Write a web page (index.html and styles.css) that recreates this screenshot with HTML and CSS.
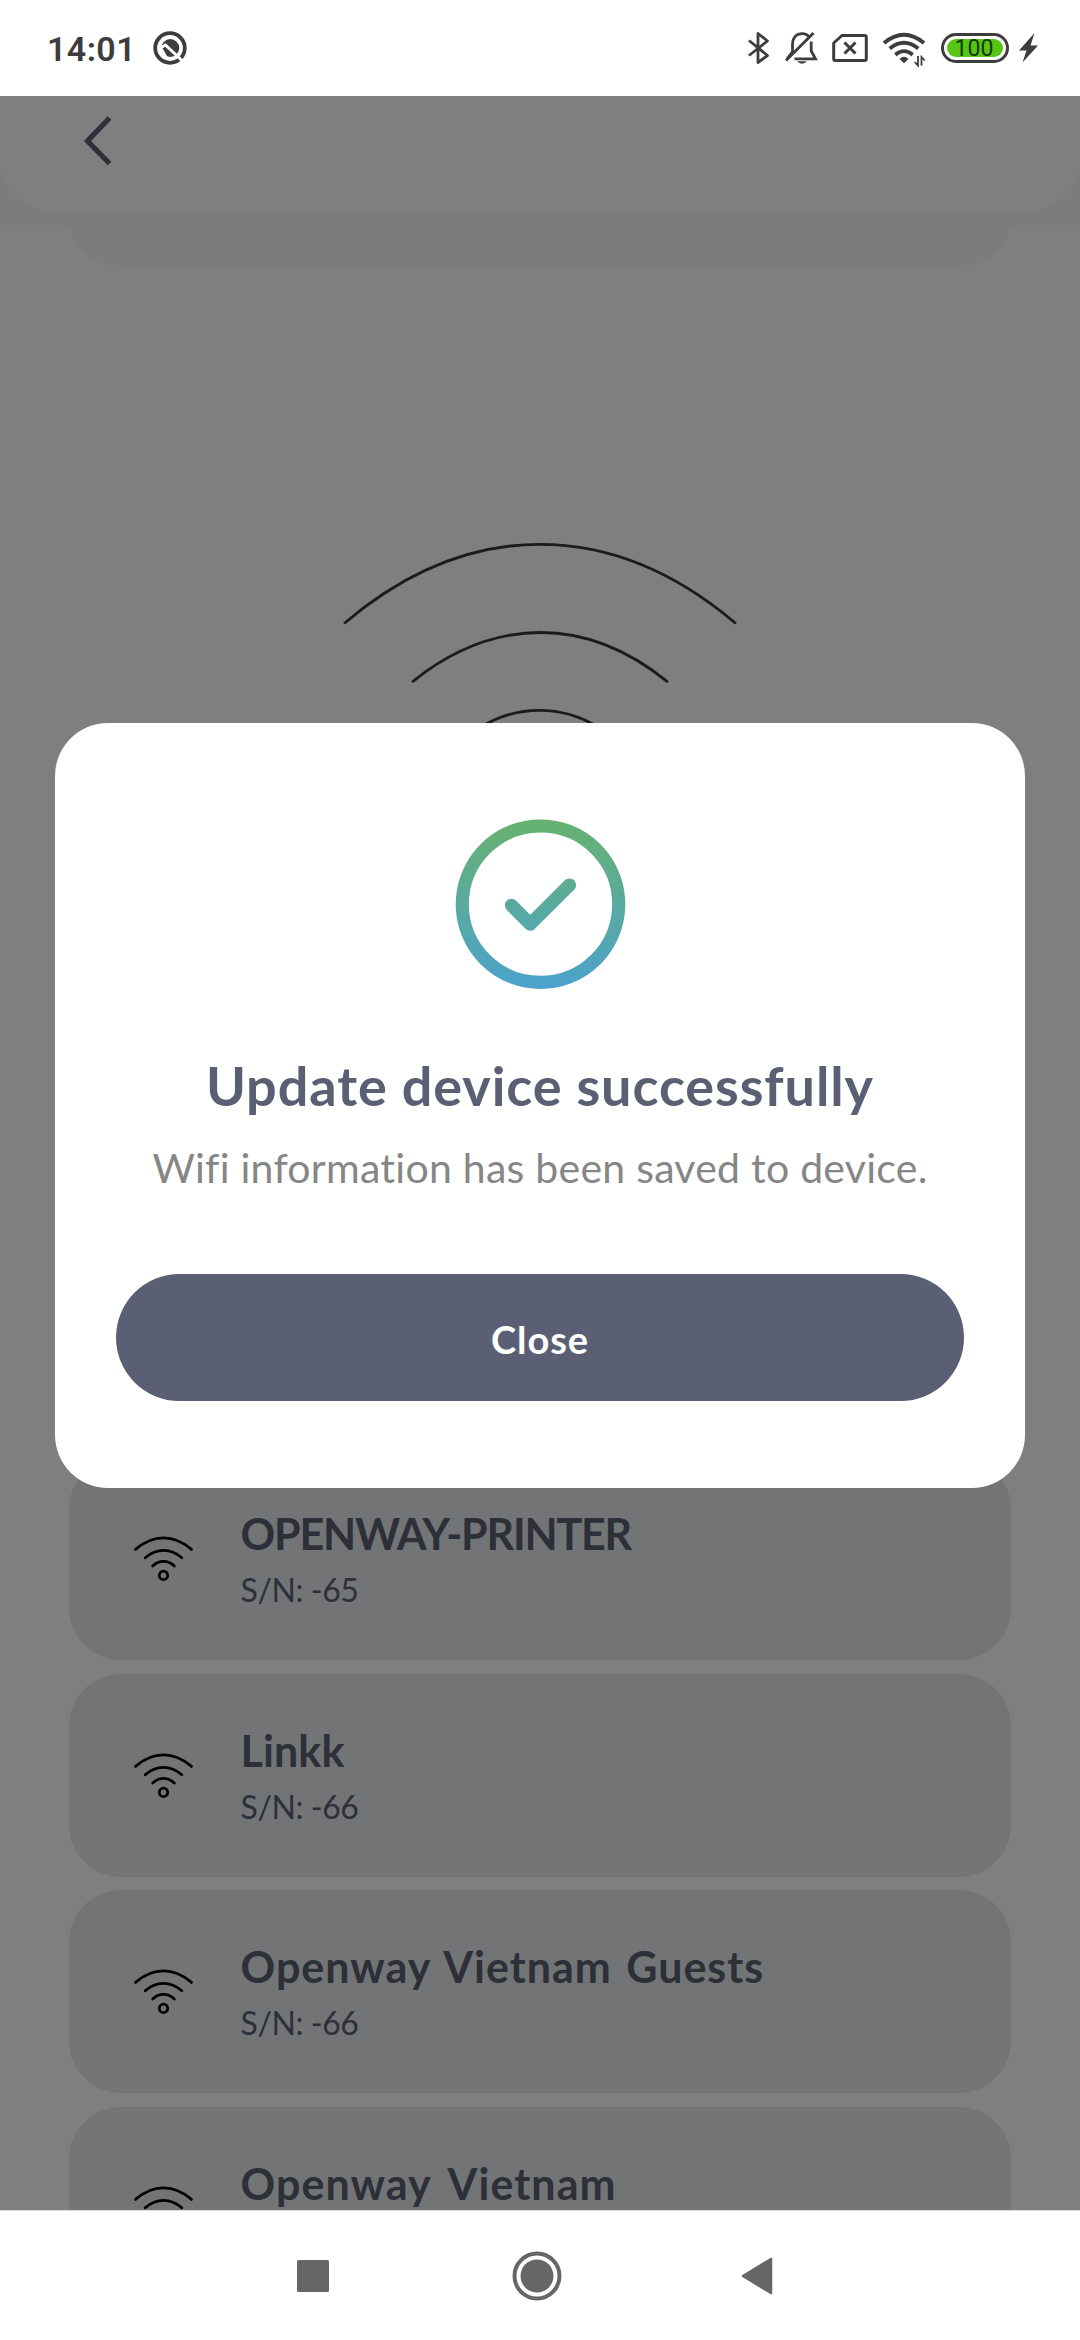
FILE: index.html
```html
<!DOCTYPE html>
<html lang="en">
<head>
<meta charset="utf-8">
<title>Update device</title>
<link rel="stylesheet" href="styles.css">
</head>
<body>
<svg class="defs" width="0" height="0">
  <symbol id="wifi" viewBox="0 0 62 48">
    <g fill="none" stroke="#000" stroke-width="2.8" stroke-linecap="round">
      <path d="M2.5 13.4C20 -2 41 -2 58.5 13.4"/>
      <path d="M12.2 21.8C23.5 11.9 37.5 11.9 48.8 21.8"/>
      <path d="M19.7 30C26 23.8 35 23.8 41.3 30"/>
      <circle cx="30.5" cy="39.4" r="4.2"/>
    </g>
  </symbol>
</svg>
<div class="screen">
  <header class="status">
    <span class="time">14:01</span>
    <svg class="app-badge" width="36" height="36" viewBox="152 30 36 36">
      <circle cx="170" cy="48" r="14.8" fill="none" stroke="#3d3d3d" stroke-width="3.8"/>
      <circle cx="170.3" cy="48" r="9" fill="#3d3d3d"/>
      <path d="M161 47.5L165.5 45L183 61.5" fill="none" stroke="#fff" stroke-width="3"/>
      <path d="M160 46L167 58" stroke="#fff" stroke-width="2"/>
    </svg>
    <div class="indicators">
      <svg width="36" height="40" viewBox="742 28 36 40" fill="none" stroke="#3d3d3d" stroke-width="2.8" stroke-linejoin="round">
        <path d="M749 40.5L767.5 55.5L758 62.5V33.5L767.5 41L749 55.5"/>
      </svg>
      <svg width="48" height="40" viewBox="778 28 48 40" fill="none" stroke="#3d3d3d" stroke-width="2.8">
        <path d="M787 58.8L792.5 52V45C792.5 37 797 33.6 802 33.6C805 33.6 807.5 34.8 809 36.5M811.2 41.5V51L815.5 58.8H794.5"/>
        <path d="M786 60.5L813.5 33"/>
        <path d="M797 61.3H807Q802 66 797 61.3Z" fill="#3d3d3d" stroke="none"/>
      </svg>
      <svg width="48" height="40" viewBox="826 28 48 40" fill="none" stroke="#3d3d3d" stroke-width="3" stroke-linejoin="round">
        <path d="M842 35.5H864.5Q866.3 35.5 866.3 37.3V58.7Q866.3 60.5 864.5 60.5H835.5Q833.7 60.5 833.7 58.7V43Z"/>
        <path d="M844.5 42.5L855.5 53.5M855.5 42.5L844.5 53.5"/>
      </svg>
      <svg width="60" height="40" viewBox="874 28 60 40" fill="none" stroke="#3d3d3d" stroke-width="3.8">
        <path d="M884 43Q904 26.5 924 43M889.7 48.5Q904 37 918.3 48.500M895.3 54.7Q904 47.5 912.7 54.7"/>
        <path d="M899.5 59Q904 54.5 908.5 59L904 63.3Z" fill="#3d3d3d" stroke="none"/>
        <path d="M918 56V65.5L914.8 62M921.500 65.500V57L924.800 60.500" stroke-width="1.8"/>
      </svg>
      <div class="battery"><span class="level">100</span></div>
      <svg class="bolt" width="20" height="32" viewBox="1019 32 20 32"><path d="M1034.500 33L1019 50.500H1026.500L1022.500 62.500L1038 45.500H1030.500Z" fill="#3d3d3d"/></svg>
    </div>
  </header>

  <main class="app">
    <div class="topbar-bg">
      <div class="topbar">
        <svg width="30" height="50" viewBox="82 116 30 50"><path d="M109.500 118L87.500 141L109.500 163.500" fill="none" stroke="#5a5f73" stroke-width="5.200"/></svg>
      </div>
    </div>
    <div class="panel-end"></div>
    <div class="scan">
      <svg width="410" height="200" viewBox="335 535 410 200" fill="none" stroke="#37373f" stroke-width="2.800" stroke-linecap="round">
        <path d="M345 622.700C405 572 470 544.300 540 544.300S675 572 735 622.700"/>
        <path d="M413 681.300C452 650 495 632.500 541 632.500S628 650 667 681.300"/>
        <path d="M481 727C499 716 519 710.300 539.500 710.300S580 716 598 727"/>
      </svg>
    </div>
    <ul class="networks">
      <li class="network"><svg class="wifi" width="62" height="48"><use href="#wifi"/></svg><div class="info"><span class="name caps">OPENWAY-PRINTER</span><span class="sn">S/N: -65</span></div></li>
      <li class="network"><svg class="wifi" width="62" height="48"><use href="#wifi"/></svg><div class="info"><span class="name short">Linkk</span><span class="sn">S/N: -66</span></div></li>
      <li class="network"><svg class="wifi" width="62" height="48"><use href="#wifi"/></svg><div class="info"><span class="name long">Openway Vietnam Guests</span><span class="sn">S/N: -66</span></div></li>
      <li class="network"><svg class="wifi" width="62" height="48"><use href="#wifi"/></svg><div class="info"><span class="name">Openway Vietnam</span><span class="sn">S/N: -66</span></div></li>
    </ul>
    <div class="backdrop">
      <section class="dialog">
        <svg class="success" width="172" height="172" viewBox="454 818 172 172">
          <defs><linearGradient id="g" gradientUnits="userSpaceOnUse" x1="0" y1="819" x2="0" y2="989"><stop offset="0" stop-color="#67b26f"/><stop offset="1" stop-color="#4ca2cd"/></linearGradient></defs>
          <g fill="none" stroke="url(#g)" stroke-width="13.200" stroke-linecap="round" stroke-linejoin="round">
            <circle cx="540.500" cy="904.200" r="78.200"/>
            <path d="M511.500 905.300L530.200 924.200L569.500 885"/>
          </g>
        </svg>
        <h1 class="title">Update device successfully</h1>
        <p class="message">Wifi information has been saved to device.</p>
        <button class="close">Close</button>
      </section>
    </div>
  </main>

  <nav class="navbar">
    <svg width="32" height="32"><rect width="32" height="32" rx="1.500" fill="#666"/></svg>
    <svg width="50" height="50"><circle cx="25" cy="25" r="22.500" fill="none" stroke="#666" stroke-width="4"/><circle cx="25" cy="25" r="16.500" fill="#666"/></svg>
    <svg width="32" height="38"><path d="M2 19L30 2V36Z" fill="#666" stroke="#666" stroke-width="2.500" stroke-linejoin="round"/></svg>
  </nav>
</div>
</body>
</html>
```
FILE: styles.css
```css
* { box-sizing: border-box; }
body { margin: 0; background: #fff; font-family: Lato, "Open Sans", sans-serif; }
.defs { position: absolute; }
.screen { width: 1080px; height: 2340px; display: flex; flex-direction: column; overflow: hidden; }

.status { height: 96px; flex: none; display: flex; align-items: center; padding-left: 47px; color: #3d3d3d; font-family: Roboto, sans-serif; }
.time { width: 105px; font-size: 34px; font-weight: 600; line-height: 40px; padding-top: 2px; letter-spacing: 0.4px; }
.indicators { margin-left: auto; display: flex; align-items: center; padding-right: 41px; }
.battery { width: 68px; height: 30px; margin: 0 10px 0 7px; padding: 3px; border: 3px solid #3d3d3d; border-radius: 15px; }
.level { display: block; height: 18px; border-radius: 9px; background: #57c514; color: #143a08; font-size: 23px; font-weight: 400; line-height: 20px; text-align: center; padding-right: 2px; }

.app { position: relative; height: 2114px; flex: none; overflow: hidden; display: flex; flex-direction: column; align-items: center; }
.topbar-bg { width: 100%; height: 130px; flex: none; background: #f8f8f8; }
.topbar { height: 116px; padding: 20px 0 0 82px; background: #fff; border-radius: 0 0 52px 52px; }
.panel-end { width: 942px; height: 41px; flex: none; overflow: hidden; display: flex; align-items: flex-end; }
.panel-end::before { content: ""; flex: 1; height: 120px; background: #f8f8f8; border-radius: 52px; }
.scan { height: 1190px; flex: none; padding-top: 268px; }
.networks { list-style: none; margin: 0; padding: 0; width: 942px; display: flex; flex-direction: column; gap: 13.6px; }
.network { height: 203px; flex: none; background: #e6e8ec; border-radius: 52px; display: flex; padding-left: 63.5px; }
.wifi { margin-top: 79px; flex: none; }
.info { padding: 50px 0 0 46px; display: flex; flex-direction: column; align-items: flex-start; color: #5a5f73; white-space: nowrap; }
.name { font-size: 43px; line-height: 54px; font-weight: 700; letter-spacing: 1.05px; word-spacing: 7px; }
.name.caps { letter-spacing: -1.2px; }
.name.short { letter-spacing: 0.1px; }
.name.long { letter-spacing: 1px; word-spacing: 3px; }
.sn { font-size: 32px; line-height: 40px; margin-top: 9px; letter-spacing: -0.45px; }

.backdrop { position: absolute; inset: 0; background: rgba(0, 0, 0, 0.5); padding: 627px 55px 0; }
.dialog { height: 765px; padding: 95px 61px 0; background: #fff; border-radius: 53px; display: flex; flex-direction: column; align-items: center; white-space: nowrap; }
.success { flex: none; }
.title { margin: 60px 0 0; font-size: 54px; line-height: 72px; font-weight: 700; color: #5a5f73; letter-spacing: 0.9px; }
.message { margin: 19px 0 0; font-size: 41px; line-height: 54px; color: #868686; letter-spacing: 0.25px; }
.close { width: 848px; height: 127px; margin-top: 79px; padding: 2px 0 0; border: 0; border-radius: 63.5px; background: #5a5f73; color: #fff; font: 700 38px/48px Lato, sans-serif; letter-spacing: 0.9px; }

.navbar { flex: 1; border-top: 1px solid #ddd; display: flex; align-items: center; padding-left: 297px; }
.navbar svg + svg { margin-left: 183px; }
.navbar svg:last-child { margin-left: 179px; }
```
